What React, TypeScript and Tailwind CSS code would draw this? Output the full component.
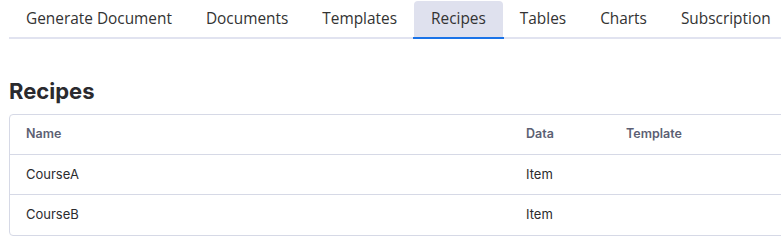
import React from "react";

const tabs = ["Generate Document", "Documents", "Templates", "Recipes", "Tables", "Charts", "Subscription"];

export default function App() {
  return (
    <div className="w-[781px] h-[242px] overflow-hidden bg-white" style={{ fontFamily: "Inter, sans-serif" }}>
      <div className="pl-[9px]">
        <div className="flex border-b-2 border-[#e1e3f0] w-[900px]" style={{ fontFamily: "'Open Sans', sans-serif" }}>
          {tabs.map((t) => {
            const active = t === "Recipes";
            return (
              <div key={t} className="relative">
                <div
                  className={
                    "h-[36px] px-[17px] flex items-center text-[15.4px] text-[#333333] mt-[1px] rounded-t-[4px] whitespace-nowrap " +
                    (active ? "bg-[#dfe1ee]" : "")
                  }
                >
                  {t}
                </div>
                {active && <div className="absolute left-[-1px] right-[-1px] bottom-[-2px] h-[2px] bg-[#1a73e8]" />}
              </div>
            );
          })}
        </div>
        <h1 className="mt-[40px] text-[22px] leading-[24px] font-bold text-[#2a2a2e]">Recipes</h1>
        <div className="mt-[11px] w-[900px] border border-[#d6d9e6] rounded-[4px]">
          <div className="flex h-[40px] items-center text-[12.5px] font-semibold text-[#5c5f73] border-b border-[#d6d9e6]">
            <div className="w-[516px] pl-[16px]">Name</div>
            <div className="w-[100px]">Data</div>
            <div>Template</div>
          </div>
          {["CourseA", "CourseB"].map((n, i) => (
            <div
              key={n}
              className={"flex h-[40px] items-center text-[13px] text-[#2b2b2e] " + (i === 0 ? "border-b border-[#d6d9e6]" : "")}
            >
              <div className="w-[516px] pl-[16px]">{n}</div>
              <div className="w-[100px]">Item</div>
              <div></div>
            </div>
          ))}
        </div>
      </div>
    </div>
  );
}
